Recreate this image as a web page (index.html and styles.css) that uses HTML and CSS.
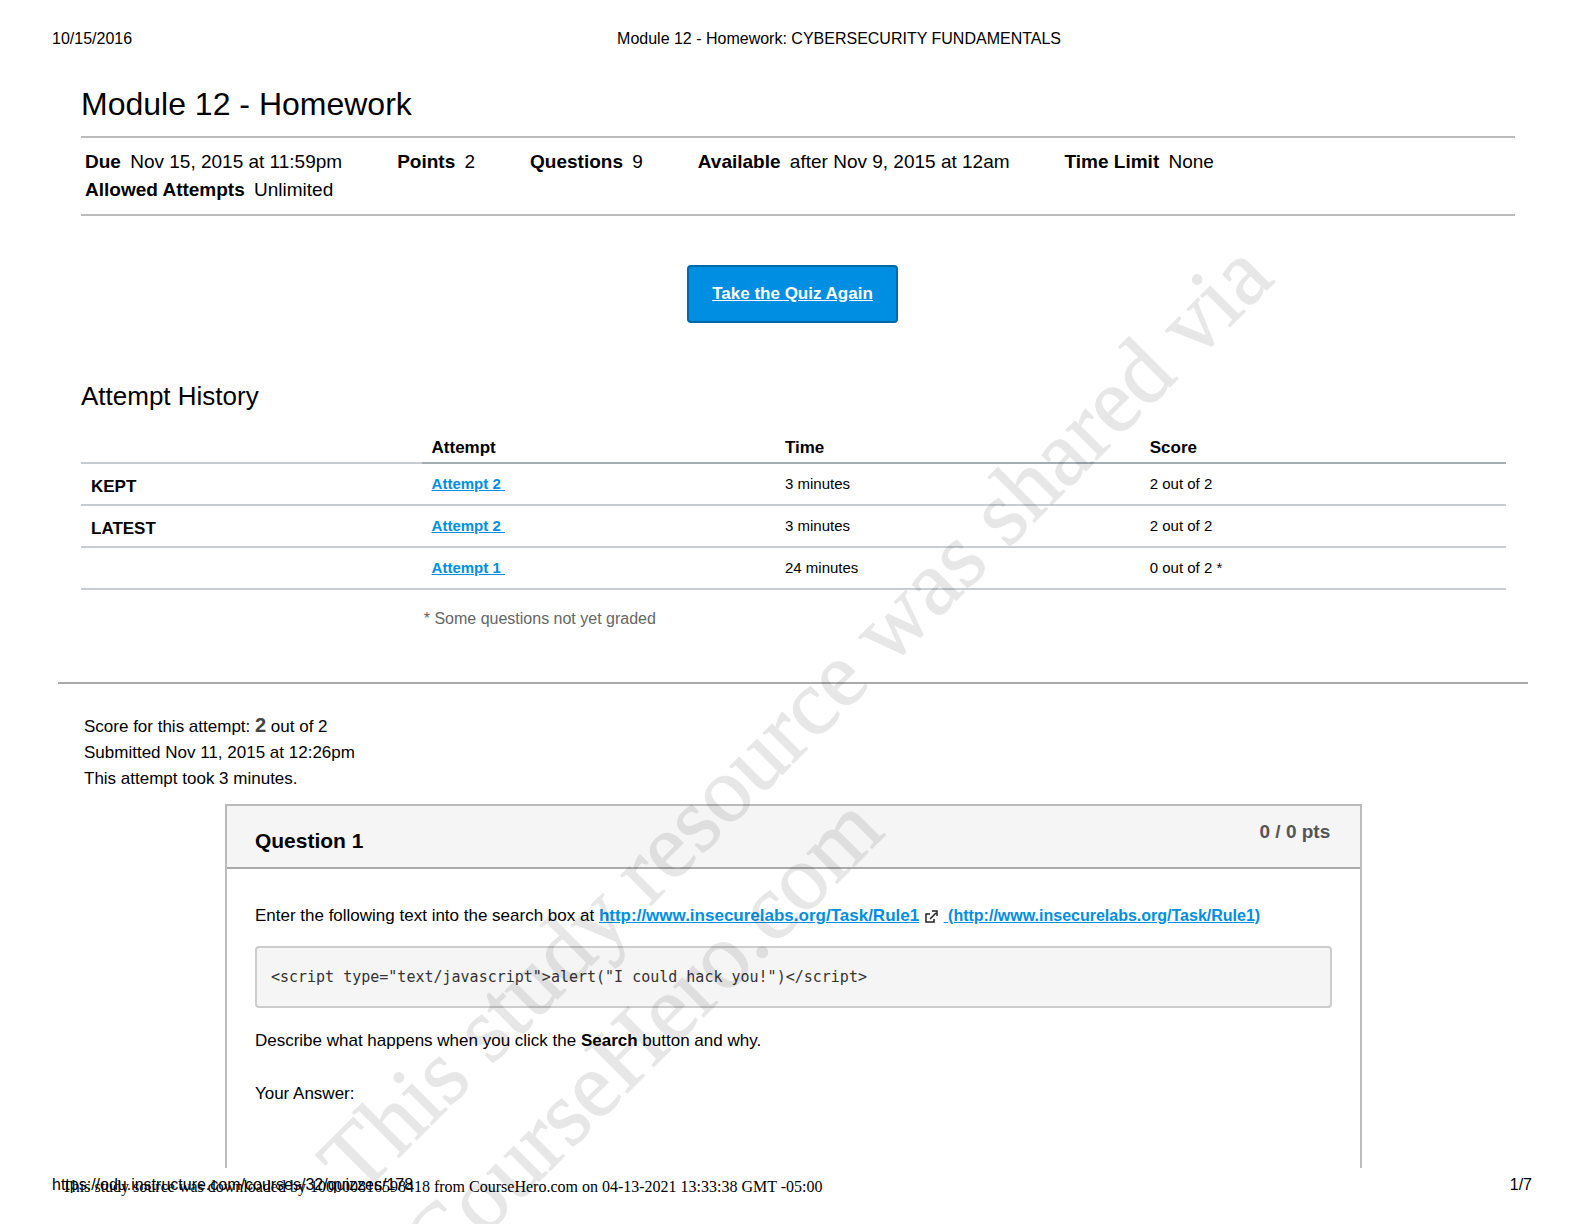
FILE: index.html
```
<!DOCTYPE html>
<html lang="en">
<head>
    <meta charset="UTF-8">
    <meta name="viewport" content="width=device-width, initial-scale=1.0">
    <title>Module 12 - Homework: CYBERSECURITY FUNDAMENTALS</title>
    <link rel="stylesheet" href="styles.css">
</head>
<body>
<div class="page">
    <header class="print-header">
        <span>10/15/2016</span>
        <span class="print-title">Module 12 - Homework: CYBERSECURITY FUNDAMENTALS</span>
    </header>

    <main>
        <section class="quiz">
            <h1>Module 12 - Homework</h1>
            <ul class="details">
                <li><b>Due</b> Nov 15, 2015 at 11:59pm</li>
                <li><b>Points</b> 2</li>
                <li><b>Questions</b> 9</li>
                <li><b>Available</b> after Nov 9, 2015 at 12am</li>
                <li><b>Time Limit</b> None</li>
                <li><b>Allowed Attempts</b> Unlimited</li>
            </ul>
            <div class="actions">
                <a class="take-btn" href="#">Take the Quiz Again</a>
            </div>

            <h2>Attempt History</h2>
            <table class="history">
                <thead>
                    <tr><td></td><th scope="col">Attempt</th><th scope="col">Time</th><th scope="col">Score</th></tr>
                </thead>
                <tbody>
                    <tr><th scope="row">KEPT</th><td><a href="#">Attempt 2&nbsp;</a></td><td>3 minutes</td><td>2 out of 2</td></tr>
                    <tr><th scope="row">LATEST</th><td><a href="#">Attempt 2&nbsp;</a></td><td>3 minutes</td><td>2 out of 2</td></tr>
                    <tr><td></td><td><a href="#">Attempt 1&nbsp;</a></td><td>24 minutes</td><td>0 out of 2 *</td></tr>
                </tbody>
            </table>
            <p class="note">* Some questions not yet graded</p>
        </section>

        <hr>

        <section class="score">
            <p>Score for this attempt: <b>2</b> out of 2</p>
            <p>Submitted Nov 11, 2015 at 12:26pm</p>
            <p>This attempt took 3 minutes.</p>
        </section>

        <section class="question">
            <div class="question-header">
                <h3>Question 1</h3>
                <span class="points">0 / 0 pts</span>
            </div>
            <div class="question-text">
                <p>Enter the following text into the search box at <a href="#">http://www.insecurelabs.org/Task/Rule1</a>
                    <svg class="external" viewBox="0 0 13 13" aria-hidden="true">
                        <path d="M5 4H1v8h8V9M5 9l6-6M7 1h5v5" />
                    </svg>
                    <a class="link-url" href="#">&nbsp;(http://www.insecurelabs.org/Task/Rule1)</a></p>
                <pre>&lt;script type="text/javascript"&gt;alert("I could hack you!")&lt;/script&gt;</pre>
                <p>Describe what happens when you click the <b>Search</b> button and why.</p>
                <p class="answer">Your Answer:</p>
            </div>
        </section>
    </main>

    <footer class="print-footer">
        <span>https://odu.instructure.com/courses/32/quizzes/178</span>
        <span>1/7</span>
        <span class="source">This study source was downloaded by 100000816598418 from CourseHero.com on 04-13-2021 13:33:38 GMT -05:00</span>
    </footer>

    <div class="watermark">This study resource was shared via<br>CourseHero.com</div>
</div>
</body>
</html>
```
FILE: styles.css
```
* {
    box-sizing: border-box;
    margin: 0;
    padding: 0;
}

body {
    background-color: white;
    color: black;
    font-family: "Liberation Sans", Arial, sans-serif;
    font-size: 17px;
    line-height: 26px;
}

.page {
    position: relative;
    display: flex;
    flex-direction: column;
    min-height: 100vh;
    overflow: hidden;
}

.print-header {
    display: flex;
    padding: 29px 52px 0;
    font-size: 16px;
    line-height: 20px;
}

.print-title {
    flex: 1;
    padding-left: 14px;
    text-align: center;
}

main {
    flex: 1;
    display: flex;
    flex-direction: column;
}

.quiz {
    padding: 35px 69px 0 81px;
}

h1 {
    font-size: 32px;
    font-weight: normal;
    line-height: 40px;
    margin-bottom: 12px;
}

.details {
    display: flex;
    flex-wrap: wrap;
    column-gap: 55px;
    list-style: none;
    padding: 10px 40px 10px 4px;
    border-top: 2px solid #bbb;
    border-bottom: 2px solid #bbb;
    font-size: 19px;
    line-height: 28px;
}

.details b {
    margin-right: 4px;
}

.actions {
    display: flex;
    justify-content: center;
    padding: 49px 11px 58px 0;
}

.take-btn {
    padding: 14px 23px;
    border: 2px solid #0069a6;
    border-radius: 4px;
    background-color: #008ee2;
    color: white;
    font-weight: bold;
}

h2 {
    font-size: 26px;
    font-weight: normal;
    line-height: 30px;
    margin-bottom: 16px;
}

a {
    color: #008ee2;
    font-weight: bold;
}

.history {
    width: calc(100% - 9px);
    table-layout: fixed;
    border-spacing: 0;
    text-align: left;
    font-size: 15px;
    line-height: 20px;
}

.history th,
.history td {
    height: 42px;
    padding: 0 10px;
    border-bottom: 2px solid #c7cdd1;
}

.history th {
    padding-top: 6px;
    font-size: 17px;
}

.history thead th,
.history thead td {
    height: 37px;
}

.history thead th {
    border-color: #a5acb3;
}

.history thead > tr > :nth-child(1) {
    width: 23.9%;
}

.history thead > tr > :nth-child(2) {
    width: 24.8%;
}

.history thead > tr > :nth-child(3) {
    width: 25.6%;
}

.note {
    margin: 19px 0 53px 23.9%;
    color: #666;
    font-size: 16px;
    line-height: 20px;
}

hr {
    margin: 0 56px 0 58px;
    border: none;
    border-top: 2px solid #aaa;
}

.score {
    padding: 28px 84px 12px;
}

.score b {
    color: #444;
    font-size: 20px;
}

.question {
    flex: 1;
    margin: 0 14% 0 14.2%;
    border: 2px solid #bbb;
    border-bottom: none;
}

.question-header {
    display: flex;
    justify-content: space-between;
    padding: 13px 30px 12px 28px;
    border-bottom: 2px solid #aaa;
    background-color: #f5f5f5;
}

h3 {
    padding-top: 8px;
    font-size: 21px;
    line-height: 28px;
}

.points {
    color: #555;
    font-size: 19px;
    font-weight: bold;
}

.question-text {
    padding: 34px 28px 0;
}

.external {
    width: 13px;
    height: 13px;
    margin: 0 1px;
    vertical-align: -2px;
    fill: none;
    stroke: #222;
    stroke-width: 1.5;
}

.link-url {
    font-size: 16px;
}

pre {
    margin: 17px 0 20px;
    padding: 16px 14px;
    border: 2px solid #ccc;
    border-radius: 4px;
    background-color: #f5f5f5;
    color: #333;
    font-family: "DejaVu Sans Mono", monospace;
    font-size: 15px;
}

.answer {
    margin-top: 27px;
}

.print-footer {
    position: relative;
    display: flex;
    justify-content: space-between;
    padding: 7px 52px 29px;
    font-size: 16px;
    line-height: 20px;
}

/* download stamp printed over the page url */
.source {
    position: absolute;
    top: 9px;
    left: 62px;
    font-family: "Liberation Serif", "Times New Roman", serif;
}

.watermark {
    position: absolute;
    top: 1110px;
    left: 358px;
    font-family: "Liberation Serif", "Times New Roman", serif;
    font-size: 93px;
    line-height: 116px;
    white-space: nowrap;
    opacity: 0.09;
    -webkit-text-stroke: 1px black;
    transform: rotate(-45deg);
    transform-origin: 0 90px;
    pointer-events: none;
}
```
